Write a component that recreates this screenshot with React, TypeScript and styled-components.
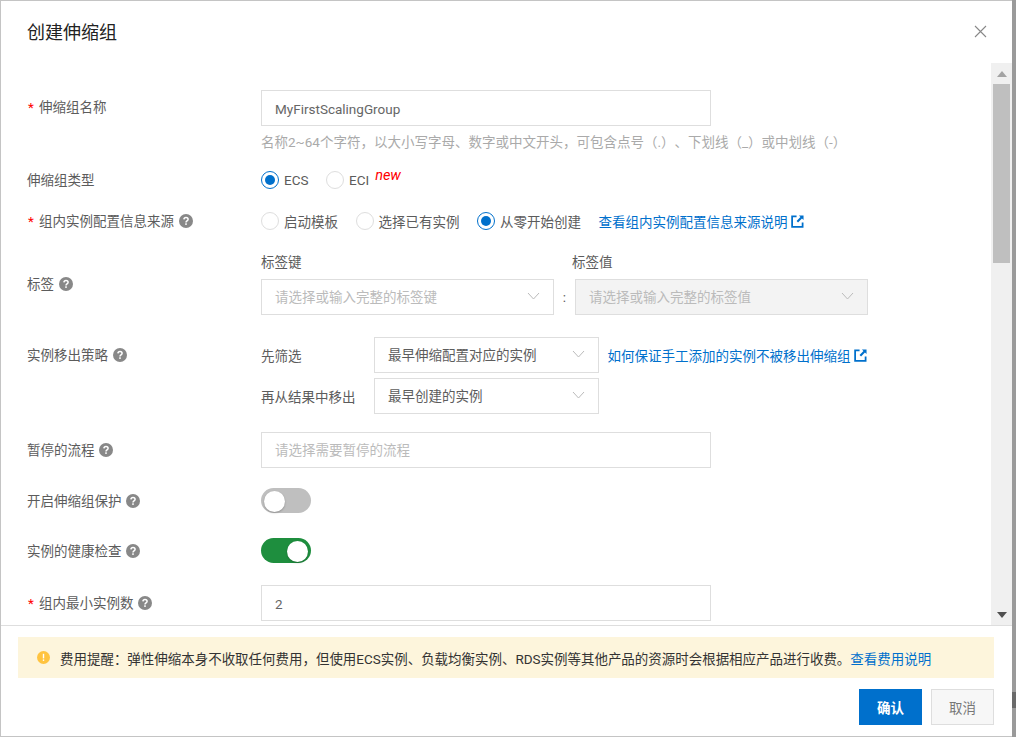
import React from 'react';
import styled, { createGlobalStyle } from 'styled-components';

const GlobalStyle = createGlobalStyle`
  html, body {
    margin: 0;
    padding: 0;
    height: 100%;
    overflow: hidden;
    background: #fff;
  }
  * { box-sizing: border-box; }
`;

const Page = styled.div`
  width: 1016px;
  height: 737px;
  display: flex;
  background: linear-gradient(to bottom, #9a9a9a 0, #9a9a9a 692px, #6a6a6a 692px, #6a6a6a 708px, #9a9a9a 708px);
  font-family: Roboto, "Noto Sans CJK SC", sans-serif;
  font-size: 13.5px;
  color: #5c5c5c;
  text-spacing-trim: space-all;
`;

const Dialog = styled.div`
  width: 1012px;
  height: 737px;
  display: flex;
  flex-direction: column;
  background: #fff;
  border: 1px solid #c4c4c4;
  border-right: 0;
`;

const Header = styled.div`
  height: 62px;
  flex: none;
  display: flex;
  align-items: center;
  justify-content: space-between;
  padding: 0 25px 2px 26px;
`;

const Title = styled.div`
  font-size: 18px;
  color: #222;
`;

const Body = styled.div`
  flex: 1;
  min-height: 0;
  display: flex;
`;

const Form = styled.div`
  flex: 1;
  min-width: 0;
  overflow: hidden;
  padding: 27px 0 0 26px;
  display: flex;
  flex-direction: column;
`;

const Row = styled.div<{ $h: number; $mb?: number }>`
  display: flex;
  height: ${(p) => p.$h}px;
  margin-bottom: ${(p) => p.$mb ?? 0}px;
  flex: none;
`;

const Label = styled.div<{ $top?: number }>`
  width: 234px;
  flex: none;
  padding-top: ${(p) => p.$top ?? 0}px;
  display: flex;
  align-items: center;
  align-self: flex-start;
  line-height: 18px;
`;

const Star = styled.span`
  color: #f00;
  width: 12px;
  padding-left: 1px;
`;

const Field = styled.div`
  flex: 1;
  min-width: 0;
  display: flex;
  flex-direction: column;
`;

const Inline = styled.div<{ $top?: number }>`
  display: flex;
  align-items: center;
  margin-top: ${(p) => p.$top ?? 0}px;
`;

const RadioGroup = styled.div<{ $h: number }>`
  display: flex;
  align-items: center;
  align-self: flex-start;
  height: ${(p) => p.$h}px;
`;

const Input = styled.div<{ $muted?: boolean }>`
  width: 450px;
  height: 36px;
  flex: none;
  border: 1px solid #dedede;
  padding: ${(p) => (p.$muted ? '0 13px 2px' : '1px 13px 0')};
  display: flex;
  align-items: center;
  color: ${(p) => (p.$muted ? '#bbb' : '#666')};
`;

const Select = styled.div<{ $w: number; $muted?: boolean; $off?: boolean }>`
  width: ${(p) => p.$w}px;
  height: 36px;
  flex: none;
  border: 1px solid #dedede;
  padding: 0 13px 2px;
  display: flex;
  align-items: center;
  justify-content: space-between;
  background: ${(p) => (p.$off ? '#f3f3f3' : '#fff')};
  color: ${(p) => (p.$muted ? '#bbb' : '#5c5c5c')};
`;

const Hint = styled.div`
  margin-top: 7px;
  color: #aaa;
  line-height: 18px;
  white-space: nowrap;
`;

const RadioItem = styled.div<{ $gap?: number }>`
  display: flex;
  align-items: center;
  gap: 5px;
  margin-right: ${(p) => p.$gap ?? 17.5}px;
`;

const RadioDot = styled.span<{ $on?: boolean }>`
  width: 18px;
  height: 18px;
  border-radius: 50%;
  flex: none;
  background: #fff;
  border: 1px solid ${(p) => (p.$on ? '#0070cc' : '#dedede')};
  display: flex;
  align-items: center;
  justify-content: center;
  &::after {
    content: '';
    display: ${(p) => (p.$on ? 'block' : 'none')};
    width: 10px;
    height: 10px;
    border-radius: 50%;
    background: #0070cc;
  }
`;

const NewMark = styled.span`
  color: #f00;
  font-style: italic;
  font-size: 14.5px;
  margin: -10px 0 0 0;
`;

const Link = styled.a<{ $left?: number }>`
  color: #0070cc;
  display: inline-flex;
  align-items: center;
  gap: 3.5px;
  margin-left: ${(p) => p.$left ?? 0}px;
`;

const ColumnTitle = styled.div<{ $w: number }>`
  width: ${(p) => p.$w}px;
  flex: none;
  line-height: 18px;
`;

const Colon = styled.span`
  width: 21px;
  text-align: center;
  flex: none;
`;

const SubLabel = styled.div`
  width: 113px;
  flex: none;
`;

const Toggle = styled.div<{ $on?: boolean }>`
  width: 50px;
  height: 25px;
  border-radius: 13px;
  background: ${(p) => (p.$on ? '#1e8e3e' : '#bfbfbf')};
  padding: 3px;
  display: flex;
  justify-content: ${(p) => (p.$on ? 'flex-end' : 'flex-start')};
  &::after {
    content: '';
    width: 21px;
    height: 21px;
    border-radius: 50%;
    background: #fff;
    box-shadow: 0 1px 2px rgba(0, 0, 0, 0.25);
  }
`;

const ScrollTrack = styled.div`
  width: 21px;
  flex: none;
  background: #f0f0f0;
  display: flex;
  flex-direction: column;
  align-items: center;
`;

const ScrollArrow = styled.div`
  height: 21px;
  flex: none;
  display: flex;
  align-items: center;
  justify-content: center;
`;

const ScrollThumb = styled.div`
  width: 17px;
  height: 179px;
  background: #bfbfbf;
  flex: none;
`;

const ScrollSpace = styled.div`
  flex: 1;
`;

const Footer = styled.div`
  height: 111px;
  flex: none;
  border-top: 1px solid #dedede;
  padding: 11px 18px 0 17px;
`;

const Alert = styled.div`
  height: 41px;
  background: #fdf5dc;
  padding-left: 19px;
  display: flex;
  align-items: center;
  gap: 10px;
  color: #333;
  font-size: 13.47px;
  white-space: nowrap;
`;

const Buttons = styled.div`
  margin-top: 11px;
  display: flex;
  justify-content: flex-end;
  gap: 9px;
`;

const Button = styled.div<{ $primary?: boolean }>`
  width: 63px;
  height: 36px;
  display: flex;
  align-items: center;
  justify-content: center;
  background: ${(p) => (p.$primary ? '#0070cc' : '#f7f7f7')};
  border: 1px solid ${(p) => (p.$primary ? '#0070cc' : '#dedede')};
  color: ${(p) => (p.$primary ? '#fff' : '#777')};
  font-weight: ${(p) => (p.$primary ? 700 : 400)};
`;

const HelpMark = styled.svg`
  margin-left: 4.5px;
  flex: none;
`;

const Help = () => (
  <HelpMark width="14" height="14" viewBox="0 0 14 14">
    <circle cx="7" cy="7" r="7" fill="#888" />
    <path d="M4.9 5.4C5 4.2 5.9 3.5 7 3.5c1.2 0 2.1.8 2.1 1.8 0 1.6-2.1 1.6-2.1 3.1" fill="none" stroke="#fff" strokeWidth="1.5" />
    <rect x="6.2" y="9.3" width="1.6" height="1.6" fill="#fff" />
  </HelpMark>
);

const Chevron = () => (
  <svg width="13" height="8" viewBox="0 0 13 8">
    <path d="M1 1l5.5 6L12 1" fill="none" stroke="#bbb" strokeWidth="1" />
  </svg>
);

const External = () => (
  <svg width="13" height="13" viewBox="0 0 14 14">
    <path d="M6 1.5H1.2v11.3h11.3V8" fill="none" stroke="#0070cc" strokeWidth="1.9" />
    <path d="M8.5 0.5h5v5L11.8 3.8 7.6 8 6 6.4 10.2 2.2z" fill="#0070cc" />
  </svg>
);

const Close = () => (
  <svg width="13" height="13" viewBox="0 0 13 13">
    <path d="M1 1l11 11M12 1L1 12" stroke="#888" strokeWidth="1.1" />
  </svg>
);

const ArrowUp = () => (
  <svg width="10" height="6" viewBox="0 0 10 6"><path d="M5 0l5 6H0z" fill="#a3a3a3" /></svg>
);

const ArrowDown = () => (
  <svg width="10" height="6" viewBox="0 0 10 6"><path d="M5 6l5-6H0z" fill="#505050" /></svg>
);

const WarnMark = styled.svg`
  flex: none;
`;

const WarnIcon = () => (
  <WarnMark width="13" height="13" viewBox="0 0 13 13">
    <circle cx="6.5" cy="6.5" r="6.5" fill="#ffc440" />
    <rect x="5.8" y="2.8" width="1.4" height="4.6" fill="#fff" />
    <rect x="5.8" y="8.4" width="1.4" height="1.5" fill="#fff" />
  </WarnMark>
);

export default function App() {
  return (
    <>
      <GlobalStyle />
      <Page>
        <Dialog>
          <Header>
            <Title>创建伸缩组</Title>
            <Close />
          </Header>
          <Body>
            <Form>
              <Row $h={68} $mb={4}>
                <Label $top={8}><Star>*</Star>伸缩组名称</Label>
                <Field>
                  <Input>MyFirstScalingGroup</Input>
                  <Hint>名称2~64个字符，以大小写字母、数字或中文开头，可包含点号（.）、下划线（_）或中划线（-）</Hint>
                </Field>
              </Row>
              <Row $h={50}>
                <Label $top={9}>伸缩组类型</Label>
                <RadioGroup $h={36}>
                  <RadioItem><RadioDot $on />ECS</RadioItem>
                  <RadioItem $gap={6}><RadioDot />ECI</RadioItem>
                  <NewMark>new</NewMark>
                </RadioGroup>
              </Row>
              <Row $h={41}>
                <Label><Star>*</Star>组内实例配置信息来源<Help /></Label>
                <RadioGroup $h={18}>
                  <RadioItem><RadioDot />启动模板</RadioItem>
                  <RadioItem><RadioDot />选择已有实例</RadioItem>
                  <RadioItem><RadioDot $on />从零开始创建</RadioItem>
                  <Link>查看组内实例配置信息来源说明<External /></Link>
                </RadioGroup>
              </Row>
              <Row $h={62} $mb={22}>
                <Label $top={22}>标签<Help /></Label>
                <Field>
                  <Inline>
                    <ColumnTitle $w={311}>标签键</ColumnTitle>
                    <ColumnTitle $w={200}>标签值</ColumnTitle>
                  </Inline>
                  <Inline $top={8}>
                    <Select $w={293} $muted>请选择或输入完整的标签键<Chevron /></Select>
                    <Colon>:</Colon>
                    <Select $w={293} $muted $off>请选择或输入完整的标签值<Chevron /></Select>
                  </Inline>
                </Field>
              </Row>
              <Row $h={77} $mb={18}>
                <Label $top={9}>实例移出策略<Help /></Label>
                <Field>
                  <Inline>
                    <SubLabel>先筛选</SubLabel>
                    <Select $w={225}>最早伸缩配置对应的实例<Chevron /></Select>
                    <Link $left={8.5}>如何保证手工添加的实例不被移出伸缩组<External /></Link>
                  </Inline>
                  <Inline $top={5}>
                    <SubLabel>再从结果中移出</SubLabel>
                    <Select $w={225}>最早创建的实例<Chevron /></Select>
                  </Inline>
                </Field>
              </Row>
              <Row $h={36} $mb={20}>
                <Label $top={9}>暂停的流程<Help /></Label>
                <Input $muted>请选择需要暂停的流程</Input>
              </Row>
              <Row $h={25} $mb={25}>
                <Label $top={4}>开启伸缩组保护<Help /></Label>
                <Toggle />
              </Row>
              <Row $h={25} $mb={22}>
                <Label $top={4}>实例的健康检查<Help /></Label>
                <Toggle $on />
              </Row>
              <Row $h={36}>
                <Label $top={9}><Star>*</Star>组内最小实例数<Help /></Label>
                <Input>2</Input>
              </Row>
            </Form>
            <ScrollTrack>
              <ScrollArrow><ArrowUp /></ScrollArrow>
              <ScrollThumb />
              <ScrollSpace />
              <ScrollArrow><ArrowDown /></ScrollArrow>
            </ScrollTrack>
          </Body>
          <Footer>
            <Alert>
              <WarnIcon />
              <span>费用提醒：弹性伸缩本身不收取任何费用，但使用ECS实例、负载均衡实例、RDS实例等其他产品的资源时会根据相应产品进行收费。<Link>查看费用说明</Link></span>
            </Alert>
            <Buttons>
              <Button $primary>确认</Button>
              <Button>取消</Button>
            </Buttons>
          </Footer>
        </Dialog>
      </Page>
    </>
  );
}
